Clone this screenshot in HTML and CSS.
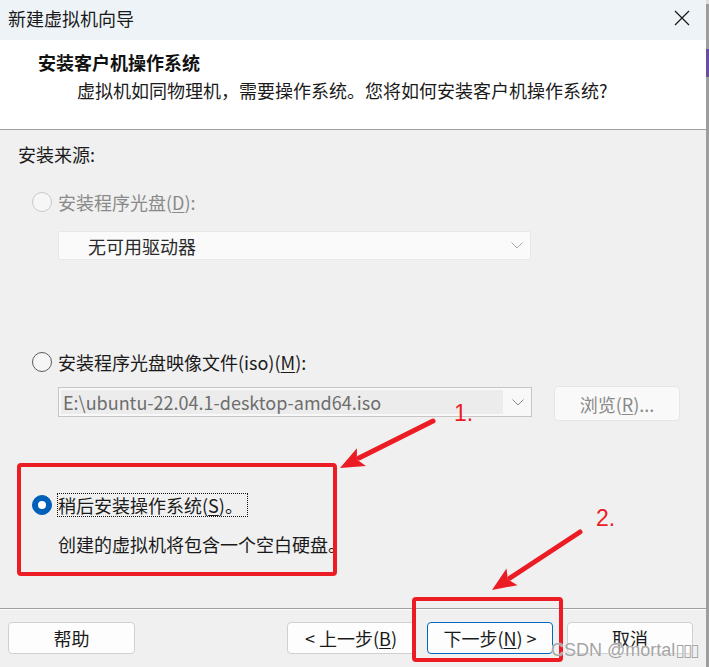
FILE: index.html
```html
<!DOCTYPE html>
<html lang="zh-CN">
<head>
<meta charset="utf-8">
<title>新建虚拟机向导</title>
<link rel="stylesheet" href="styles.css">
</head>
<body>
<div class="screen">
  <div class="window">
    <div class="titlebar">
      <span class="title">新建虚拟机向导</span>
      <svg class="close" width="16" height="16" viewBox="0 0 16 16"><path d="M1 1L15 15M15 1L1 15" stroke="#1a1a1a" stroke-width="1.3" fill="none"/></svg>
    </div>
    <div class="header">
      <div class="h-title">安装客户机操作系统</div>
      <div class="h-sub">虚拟机如同物理机，需要操作系统。您将如何安装客户机操作系统?</div>
    </div>
    <div class="content">
      <div class="section-label">安装来源:</div>
      <div class="radio-row r1 disabled"><span class="radio"></span><span class="label">安装程序光盘(<u>D</u>):</span></div>
      <div class="select">
        <span class="select-text">无可用驱动器</span>
        <svg class="chev" width="12" height="7" viewBox="0 0 12 7"><path d="M0.5 0.5L6 6L11.5 0.5" stroke="#a8a8a8" stroke-width="1" fill="none"/></svg>
      </div>
      <div class="radio-row r2"><span class="radio"></span><span class="label">安装程序光盘映像文件(iso)(<u>M</u>):</span></div>
      <div class="iso-row">
        <div class="combo">
          <span class="combo-field">E:\ubuntu-22.04.1-desktop-amd64.iso</span>
          <span class="combo-btn"><svg width="12" height="7" viewBox="0 0 12 7"><path d="M0.5 0.5L6 6L11.5 0.5" stroke="#8c8c8c" stroke-width="1" fill="none"/></svg></span>
        </div>
        <div class="browse">浏览(<u>R</u>)...</div>
      </div>
      <div class="radio-row r3"><span class="radio on"></span><span class="label focus">稍后安装操作系统(<u>S</u>)。</span></div>
      <div class="desc">创建的虚拟机将包含一个空白硬盘。</div>
    </div>
    <div class="footer">
      <div class="btn help">帮助</div>
      <div class="btn prev">&lt; 上一步(<u>B</u>)</div>
      <div class="btn next">下一步(<u>N</u>) &gt;</div>
      <div class="btn cancel">取消</div>
    </div>
  </div>
  <div class="edge"><div class="edge-top"></div><div class="edge-purple"></div></div>
</div>

<svg class="annot" width="709" height="667" viewBox="0 0 709 667">
  <g fill="none" stroke="#ec1c24" stroke-width="4" stroke-linejoin="round">
    <rect x="19" y="465" width="316" height="109" rx="2"/>
    <rect x="414" y="599" width="147" height="61" rx="2"/>
  </g>
  <g stroke="#ec1c24" stroke-width="5" stroke-linecap="round">
    <line x1="433" y1="421" x2="359" y2="458"/>
    <line x1="580" y1="532" x2="510" y2="578"/>
  </g>
  <g fill="#ec1c24">
    <polygon points="340,468 365.9,466.1 356.9,459.4 356.9,448.3"/>
    <polygon points="492,590 517.5,585.2 507.9,579.5 506.5,568.5"/>
  </g>
</svg>
<div class="num n1">1.</div>
<div class="num n2">2.</div>
<div class="watermark">CSDN @mortal<span class="tofu">▯▯▯</span></div>
</body>
</html>
```

FILE: styles.css
```css
* { box-sizing: border-box; }
html, body { margin: 0; padding: 0; }
body {
  width: 709px;
  height: 667px;
  overflow: hidden;
  position: relative;
  background: #f0f0f0;
  font-family: "Noto Sans CJK SC", "Noto Sans", sans-serif;
  font-size: 18px;
  color: #1b1b1b;
}
u { text-decoration: underline; text-underline-offset: 2px; text-decoration-thickness: 1px; }

.screen { display: flex; width: 709px; height: 667px; }
.window {
  width: 706px;
  height: 667px;
  display: flex;
  flex-direction: column;
  background: #f0f0f0;
}
.edge { width: 3px; background: #9d9d9d; display: flex; flex-direction: column; }
.edge-top { height: 4px; background: #dcdcdc; }
.edge-purple { margin-top: 45px; height: 28px; background: #6b4e9e; }

.titlebar {
  height: 40px;
  flex: none;
  background: #eef3f8;
  display: flex;
  align-items: flex-start;
  justify-content: space-between;
  padding: 6px 16px 0 8px;
}
.title { line-height: 24px; color: #1a1a1a; }
.close { margin-top: 4px; }

.header {
  height: 90px;
  flex: none;
  background: #ffffff;
  border-bottom: 1px solid #a0a0a0;
  padding-top: 10px;
}
.h-title { padding-left: 38px; font-weight: 700; line-height: 24px; color: #111; }
.h-sub { padding-left: 77px; margin-top: 4px; line-height: 24px; color: #1a1a1a; }

.content { height: 478px; flex: none; padding-top: 12px; }
.section-label { margin-left: 18px; line-height: 24px; }

.radio-row {
  display: flex;
  align-items: center;
  gap: 6px;
  margin-left: 32px;
  height: 24px;
  line-height: 24px;
}
.r1 { margin-top: 24px; }
.r2 { margin-top: 90px; }
.r3 { margin-top: 72px; }
.radio {
  width: 20px;
  height: 20px;
  flex: none;
  border-radius: 50%;
  border: 1px solid #5c5c5c;
  background: #f5f5f5;
  position: relative;
}
.disabled .radio { border-color: #c9c9c9; background: #f6f6f6; }
.disabled .label { color: #8a8a8a; }
.radio.on { background: #005fb8; border-color: #005fb8; }
.radio.on::after {
  content: "";
  position: absolute;
  left: 5px;
  top: 5px;
  width: 8px;
  height: 8px;
  border-radius: 50%;
  background: #ffffff;
}
.label.focus {
  outline: 1px dotted #111;
  outline-offset: -1px;
  margin-left: -1px;
  padding: 0 5px 0 1px;
}

.select {
  margin: 17px 0 0 58px;
  width: 473px;
  height: 29px;
  background: #fafafa;
  border: 1px solid #e8e8e8;
  border-radius: 2px;
  display: flex;
  align-items: center;
  justify-content: space-between;
  padding: 0 7px 0 29px;
}
.select-text { line-height: 24px; color: #2a2a2a; }

.iso-row { display: flex; align-items: flex-start; margin: 12px 0 0 58px; }
.combo {
  margin-top: 1px;
  width: 474px;
  height: 30px;
  border: 1px solid #c6c6c6;
  background: #f8f8f8;
  display: flex;
}
.combo-field {
  flex: 1;
  margin: 2px 0 2px 2px;
  background: #ececec;
  padding-left: 2px;
  line-height: 24px;
  color: #6e6e6e;
  white-space: nowrap;
  overflow: hidden;
}
.combo-btn { width: 28px; display: flex; align-items: center; justify-content: center; padding-left: 2px; }
.browse {
  margin-left: 22px;
  width: 126px;
  height: 35px;
  background: #f9f9f9;
  border: 1px solid #e6e6e6;
  border-radius: 4px;
  display: flex;
  align-items: center;
  justify-content: center;
  line-height: 24px;
  color: #8a8a8a;
}

.desc { margin: 15px 0 0 58px; line-height: 24px; color: #1a1a1a; }

.footer {
  flex: 1;
  border-top: 1px solid #a0a0a0;
  box-shadow: inset 0 1px 0 #fbfbfb;
  display: flex;
  align-items: flex-start;
  padding: 13px 0 0 8px;
}
.btn {
  height: 32px;
  background: #fdfdfd;
  border: 1px solid #d0d0d0;
  border-radius: 4px;
  display: flex;
  align-items: center;
  justify-content: center;
  line-height: 24px;
  color: #1a1a1a;
}
.help { width: 127px; margin-right: 152px; }
.prev { width: 128px; margin-right: 12px; }
.next { width: 126px; margin-right: 14px; border-color: #0067c0; }
.cancel { width: 126px; }

.annot { position: absolute; left: 0; top: 0; pointer-events: none; }
.num {
  position: absolute;
  font-family: "Liberation Sans", sans-serif;
  font-size: 23px;
  line-height: 23px;
  color: #ec1c24;
}
.n1 { left: 454px; top: 402px; }
.n2 { left: 596px; top: 507px; }

.watermark {
  position: absolute;
  left: 551px;
  top: 641px;
  font-family: "Liberation Sans", sans-serif;
  font-size: 18px;
  line-height: 18px;
  color: #a4a4a4;
  text-shadow: 0 0 1px #ffffff, 0 0 1px #ffffff;
  white-space: nowrap;
}
.tofu { font-family: "DejaVu Sans", sans-serif; font-size: 17px; letter-spacing: -2px; }
```
